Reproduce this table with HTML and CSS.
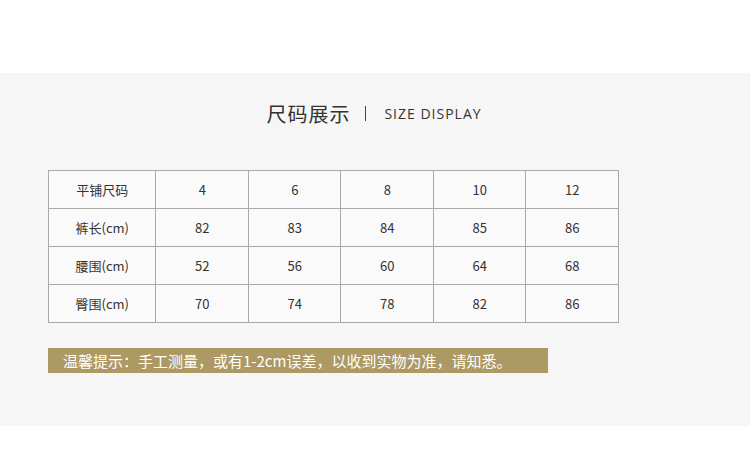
FILE: index.html
```html
<!DOCTYPE html>
<html lang="zh">
<head>
<meta charset="utf-8">
<link rel="stylesheet" href="styles.css">
</head>
<body>
<div class="band">
  <div class="title">
    <span class="cn">尺码展示</span>
    <span class="bar"></span>
    <span class="en">SIZE DISPLAY</span>
  </div>
  <table class="size">
    <tr><td>平铺尺码</td><td>4</td><td>6</td><td>8</td><td>10</td><td>12</td></tr>
    <tr><td>裤长(cm)</td><td>82</td><td>83</td><td>84</td><td>85</td><td>86</td></tr>
    <tr><td>腰围(cm)</td><td>52</td><td>56</td><td>60</td><td>64</td><td>68</td></tr>
    <tr><td>臀围(cm)</td><td>70</td><td>74</td><td>78</td><td>82</td><td>86</td></tr>
  </table>
  <div class="note">温馨提示：手工测量，或有1-2cm误差，以收到实物为准，请知悉。</div>
</div>
</body>
</html>
```
FILE: styles.css
```css
html, body { margin: 0; padding: 0; background: #fff; }
body {
  font-family: "Noto Sans CJK SC", "Noto Sans", sans-serif;
  color: #333;
  width: 750px;
  height: 457px;
  padding-top: 73px;
  box-sizing: border-box;
}
.band {
  background: #f6f6f6;
  height: 353px;
  padding: 0 48px;
  box-sizing: border-box;
  overflow: hidden;
}
.title {
  display: flex;
  align-items: center;
  justify-content: center;
  height: 80px;
  box-sizing: border-box;
  padding-right: 2px;
}
.title .cn {
  font-size: 20px;
  letter-spacing: 1px;
  color: #333;
}
.title .bar {
  width: 1px;
  height: 15px;
  background: #444;
  margin: 0 18px 0 15px;
}
.title .en {
  font-family: "Open Sans", "Noto Sans", sans-serif;
  font-size: 14px;
  letter-spacing: 1px;
  color: #333;
}
.size {
  margin-top: 17px;
  border-collapse: collapse;
  width: 571px;
  background: #fafafa;
}
.size td {
  border: 1px solid #a8a8a8;
  height: 37px;
  padding: 0;
  text-align: center;
  font-size: 13px;
  width: 92px;
  color: #333;
}
.size td:first-child { width: 107px; }
.note {
  margin-top: 25px;
  width: 500px;
  height: 25px;
  background: #ac9964;
  color: #fff;
  font-size: 15px;
  line-height: 25px;
  padding-left: 15px;
  box-sizing: border-box;
}
```
